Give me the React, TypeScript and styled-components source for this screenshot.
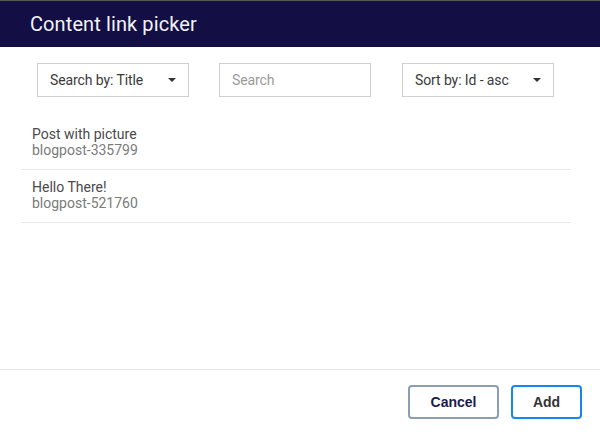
import React from "react";
import styled, { createGlobalStyle } from "styled-components";

const Global = createGlobalStyle`
  html, body { margin: 0; padding: 0; background: #fff; }
  body { font-family: Roboto, "Liberation Sans", Arial, sans-serif; }
  * { box-sizing: border-box; }
`;

const Dialog = styled.div`
  width: 600px;
  height: 434px;
  display: flex;
  flex-direction: column;
  background: #fff;
`;

const Header = styled.header`
  height: 47px;
  border-top: 1px solid #5a5a5a;
  background: #130f45;
  display: flex;
  align-items: center;
  padding-left: 30px;
`;

const Title = styled.h1`
  margin: 0;
  font-size: 20px;
  font-weight: 400;
  color: #f2f2f7;
  letter-spacing: 0.1px;
`;

const Body = styled.div`
  flex: 1;
  display: flex;
  flex-direction: column;
`;

const Toolbar = styled.div`
  display: grid;
  grid-template-columns: 152px 152px 152px;
  column-gap: 30px;
  padding: 16px 0 0 37px;
`;

const Control = styled.div<{ $placeholder?: boolean; $shift?: boolean }>`
  width: 152px;
  height: 34px;
  border: 1px solid #cfcfcf;
  display: flex;
  align-items: center;
  justify-content: space-between;
  padding: 0 11px 0 12px;
  margin-left: ${(p) => (p.$shift ? "1px" : "0")};
  font-size: 14px;
  letter-spacing: -0.1px;
  color: ${(p) => (p.$placeholder ? "#9a9a9a" : "#3a3a3a")};
  background: #fff;
`;

const Caret = styled.span`
  width: 0;
  height: 0;
  border-left: 4px solid transparent;
  border-right: 4px solid transparent;
  border-top: 4px solid #333;
  margin-right: 1px;
`;

const List = styled.ul`
  list-style: none;
  margin: 20px 30px 0 22px;
  padding: 0;
`;

const Row = styled.li`
  padding: 9px 10px 11px;
  border-bottom: 1px solid #e6e6e6;
  display: flex;
  flex-direction: column;
`;

const RowTitle = styled.span`
  font-size: 14px;
  line-height: 16px;
  color: #4a4a4a;
`;

const RowId = styled.span`
  font-size: 14px;
  line-height: 16px;
  color: #7b7b7b;
`;

const Footer = styled.footer`
  height: 65px;
  border-top: 1px solid #e3e3e3;
  display: flex;
  justify-content: flex-end;
  align-items: flex-start;
  gap: 12px;
  padding: 15px 18px 0 0;
`;

const Button = styled.button<{ $primary?: boolean }>`
  height: 34px;
  padding: 0;
  width: ${(p) => (p.$primary ? "71px" : "91px")};
  border-radius: 4px;
  border: 2px solid ${(p) => (p.$primary ? "#1787f0" : "#8c9db6")};
  background: #fff;
  font-family: "Liberation Sans", Arial, sans-serif;
  font-weight: 700;
  font-size: 14px;
  color: ${(p) => (p.$primary ? "#333333" : "#1d1b4b")};
`;

const items = [
  { title: "Post with picture", id: "blogpost-335799" },
  { title: "Hello There!", id: "blogpost-521760" },
];

export default function App() {
  return (
    <>
      <Global />
      <Dialog>
        <Header>
          <Title>Content link picker</Title>
        </Header>
        <Body>
          <Toolbar>
            <Control>
              Search by: Title <Caret />
            </Control>
            <Control $placeholder>Search</Control>
            <Control $shift>
              Sort by: Id - asc <Caret />
            </Control>
          </Toolbar>
          <List>
            {items.map((it) => (
              <Row key={it.id}>
                <RowTitle>{it.title}</RowTitle>
                <RowId>{it.id}</RowId>
              </Row>
            ))}
          </List>
        </Body>
        <Footer>
          <Button>Cancel</Button>
          <Button $primary>Add</Button>
        </Footer>
      </Dialog>
    </>
  );
}
